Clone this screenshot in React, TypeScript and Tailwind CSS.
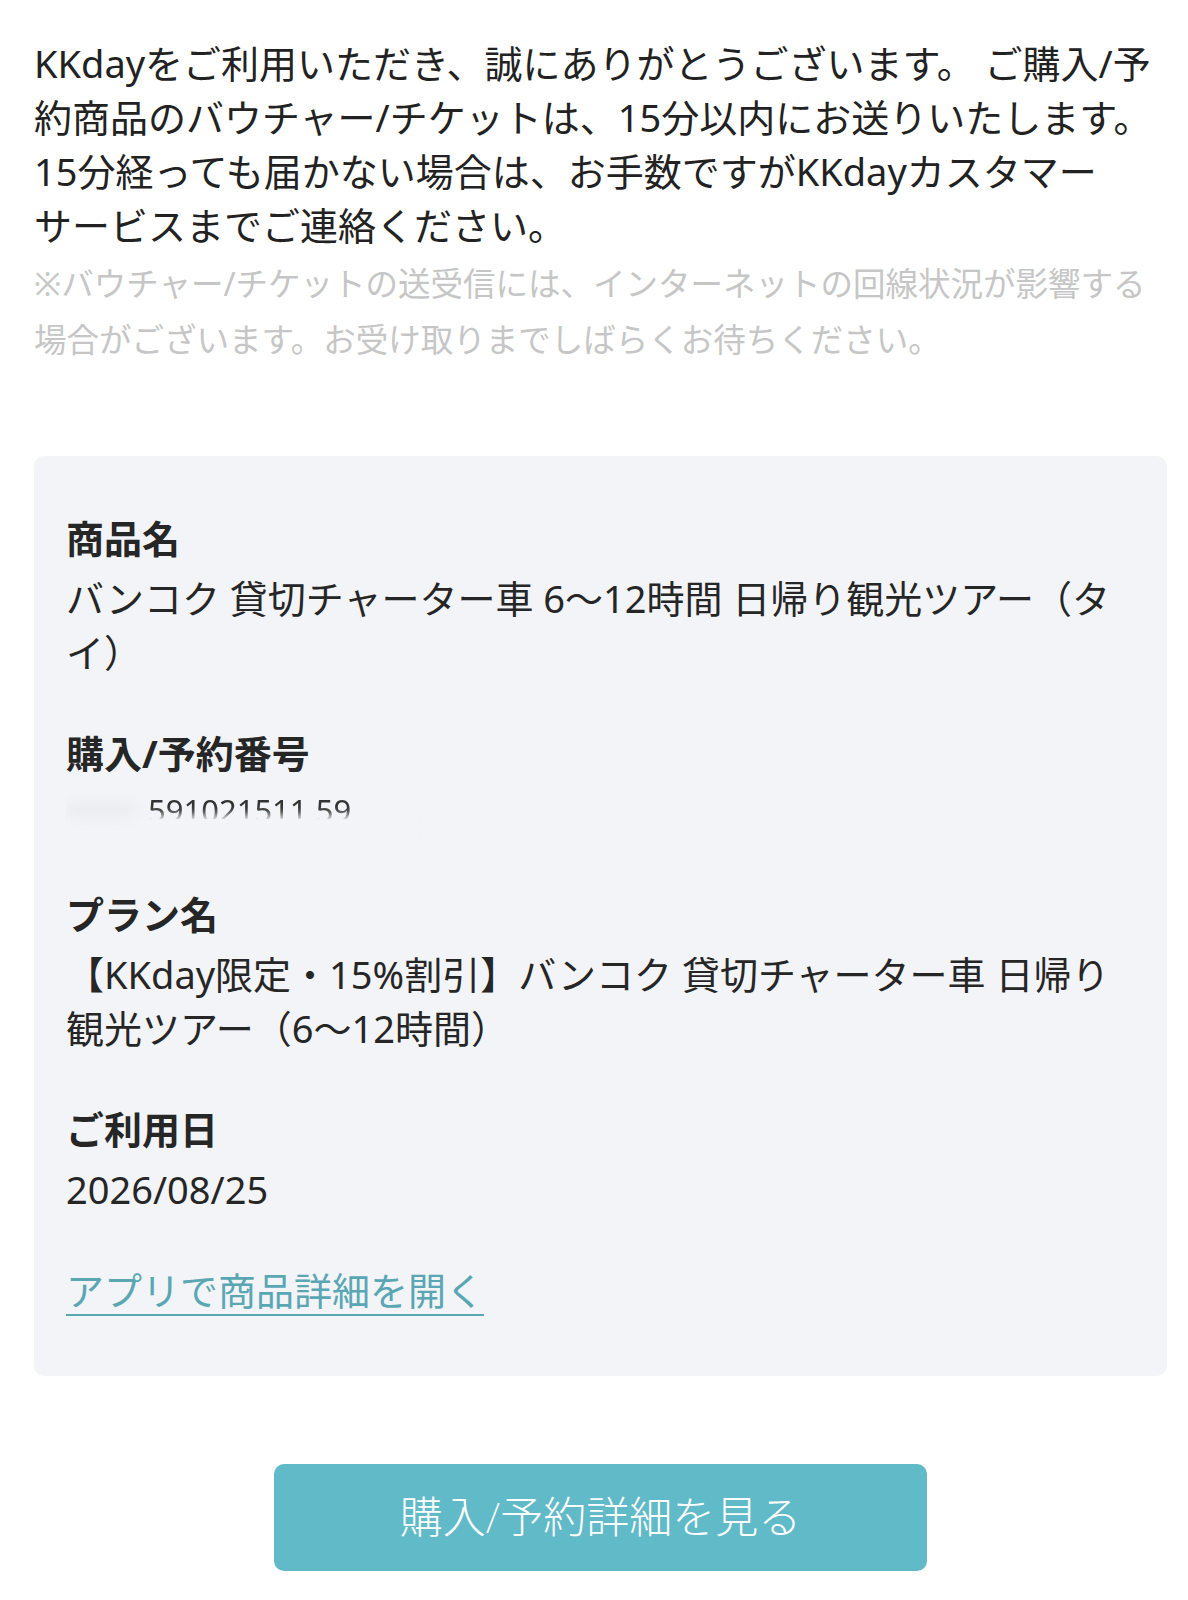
import React from "react";

const font = { fontFamily: '"Noto Sans", "Noto Sans CJK JP", sans-serif' };

function Section({ title, children }: { title: string; children: React.ReactNode }) {
  return (
    <div className="mb-[47px]">
      <div className="text-[38px] leading-[54px] font-bold text-[#262626] mb-[6px]">{title}</div>
      <div className="text-[38px] leading-[54px] text-[#262626]">{children}</div>
    </div>
  );
}

export default function App() {
  return (
    <div className="w-[1188px] min-h-[1600px] bg-white pl-[34px] pr-[21px] pt-[36px] pb-[30px]" style={font}>
      <p className="text-[38px] leading-[54px] text-[#222]">
        KKdayをご利用いただき、誠にありがとうございます。 ご購入/予約商品のバウチャー/チケットは、15分以内にお送りいたします。15分経っても届かない場合は、お手数ですがKKdayカスタマー
        <br />
        サービスまでご連絡ください。
      </p>
      <p className="mt-[4px] text-[32.5px] leading-[56px] text-[#c6c6c6]">
        ※バウチャー/チケットの送受信には、インターネットの回線状況が影響する
        <br />
        場合がございます。お受け取りまでしばらくお待ちください。
      </p>

      <div className="mt-[88px] rounded-[10px] bg-[#f2f4f8] px-[32px] pt-[55px] pb-[59px]">
        <Section title="商品名">バンコク 貸切チャーター車 6〜12時間 日帰り観光ツアー（タイ）</Section>
        <Section title="購入/予約番号">
          <div className="relative h-[54px] overflow-hidden">
            <div className="absolute left-[82px] top-[6px] h-[27px] overflow-hidden whitespace-nowrap text-[31px] leading-[36px] text-[#333] blur-[0.4px]">
              591021511 59
            </div>
            <div className="absolute left-[-10px] top-[29px] h-[24px] w-[360px] rounded-full bg-[#f2f4f8] blur-[4px]" />
            <div className="absolute left-[0px] top-[16px] h-[16px] w-[70px] rounded-full bg-[#e4e6ea] opacity-50 blur-[6px]" />
          </div>
        </Section>
        <Section title="プラン名">【KKday限定・15%割引】バンコク 貸切チャーター車 日帰り観光ツアー（6〜12時間）</Section>
        <Section title="ご利用日">2026/08/25</Section>
        <div className="text-[38px] leading-[54px] text-[#5aa7b3] underline decoration-[2px] underline-offset-[9px]">
          アプリで商品詳細を開く
        </div>
      </div>

      <div className="mt-[88px] flex justify-center">
        <div className="flex h-[107px] w-[653px] items-center justify-center rounded-[10px] bg-[#60bac8] text-[43px] font-extralight text-white">
          購入/予約詳細を見る
        </div>
      </div>
    </div>
  );
}
